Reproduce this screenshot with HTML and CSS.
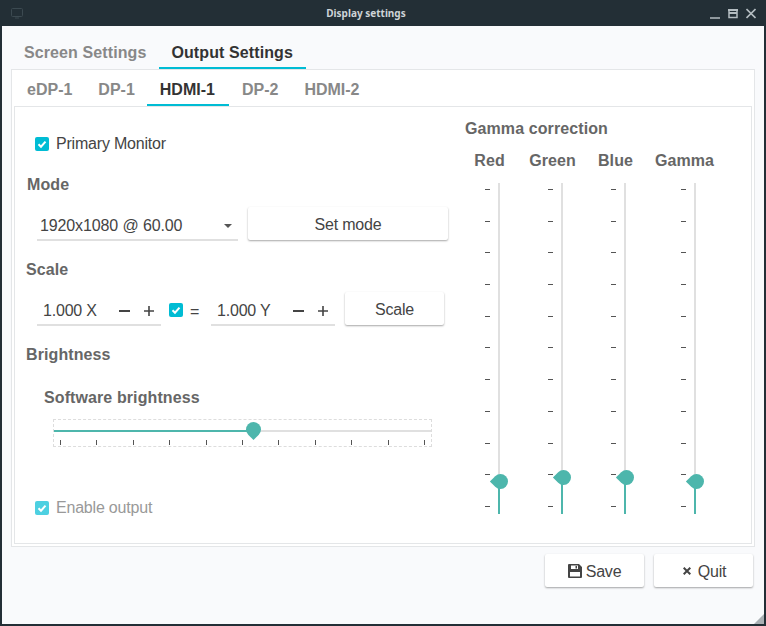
FILE: index.html
```html
<!DOCTYPE html>
<html>
	<head>
		<meta charset="utf-8">
		<title>Display settings</title>
		<link rel="stylesheet" href="styles.css">
	</head>
	<body>
		<div class="window">
			<div class="titlebar">
				<svg class="title-icon" width="14" height="12" viewBox="0 0 14 12"><path d="M2.500 1.500h9a1 1 0 0 1 1 1v6a1 1 0 0 1-1 1h-9a1 1 0 0 1-1-1v-6a1 1 0 0 1 1-1zM5 11h4" fill="none" stroke="#3c4a51" stroke-width="1"/></svg>
				<span class="title-text">Display settings</span>
				<div class="title-buttons">
					<svg width="10" height="11" viewBox="0 0 10 11"><path d="M0 10h10" stroke="#b4bdc1" stroke-width="1.500"/></svg>
					<svg width="10" height="11" viewBox="0 0 10 11"><path d="M1 2v7.500h8V2" fill="none" stroke="#b4bdc1" stroke-width="1.500"/><path d="M0 2h10M1 5h8" stroke="#b4bdc1" stroke-width="2"/></svg>
					<svg width="10" height="11" viewBox="0 0 10 11"><path d="M.5 1l9 9M9.500 1l-9 9" fill="none" stroke="#b4bdc1" stroke-width="1.600"/></svg>
				</div>
			</div>
			<div class="content">
				<div class="tabs outer-tabs">
					<div class="tab">Screen Settings</div>
					<div class="tab active">Output Settings</div>
				</div>
				<div class="outer-panel">
					<div class="tabs inner-tabs">
						<div class="tab">eDP-1</div>
						<div class="tab">DP-1</div>
						<div class="tab active">HDMI-1</div>
						<div class="tab">DP-2</div>
						<div class="tab">HDMI-2</div>
					</div>
					<div class="inner-panel">
						<div class="left-col">
							<label class="check-row primary"><span class="check"><svg width="14" height="14" viewBox="0 0 14 14"><path d="M3.500 7.200l2.500 2.500 4.500-5" fill="none" stroke="#fff" stroke-width="2"/></svg></span>Primary Monitor</label>
							<div class="heading mode-heading">Mode</div>
							<div class="mode-row">
								<div class="combo">1920x1080 @ 60.00<span class="arrow"></span></div>
								<div class="button set-mode">Set mode</div>
							</div>
							<div class="heading scale-heading">Scale</div>
							<div class="scale-row">
								<div class="spin">
									<span class="spin-value">1.000 X</span>
									<svg class="spin-btn" width="25" height="20" viewBox="0 0 25 20"><path d="M7 10h11" stroke="#444" stroke-width="2"/></svg>
									<svg class="spin-btn" width="25" height="20" viewBox="0 0 25 20"><path d="M8 10h10M13 5v10" stroke="#444" stroke-width="1.600"/></svg>
								</div>
								<span class="check"><svg width="14" height="14" viewBox="0 0 14 14"><path d="M3.500 7.200l2.500 2.500 4.500-5" fill="none" stroke="#fff" stroke-width="2"/></svg></span>
								<span class="equals">=</span>
								<div class="spin">
									<span class="spin-value">1.000 Y</span>
									<svg class="spin-btn" width="25" height="20" viewBox="0 0 25 20"><path d="M7 10h11" stroke="#444" stroke-width="2"/></svg>
									<svg class="spin-btn" width="25" height="20" viewBox="0 0 25 20"><path d="M8 10h10M13 5v10" stroke="#444" stroke-width="1.600"/></svg>
								</div>
								<div class="button scale-button">Scale</div>
							</div>
							<div class="heading brightness-heading">Brightness</div>
							<div class="heading software-heading">Software brightness</div>
							<div class="h-slider">
								<div class="h-track"><div class="h-fill"></div><div class="thumb thumb-down"></div></div>
								<div class="h-ticks">
									<i></i><i></i><i></i><i></i><i></i><i></i><i></i><i></i><i></i><i></i><i></i>
								</div>
							</div>
							<label class="check-row disabled"><span class="check"><svg width="14" height="14" viewBox="0 0 14 14"><path d="M3.500 7.200l2.500 2.500 4.500-5" fill="none" stroke="#fff" stroke-width="2"/></svg></span>Enable output</label>
						</div>
						<div class="right-col">
							<div class="heading gamma-heading">Gamma correction</div>
							<div class="gamma-cols">
								<div class="gamma-col">
									<div class="heading gamma-label">Red</div>
									<div class="v-slider">
										<div class="v-ticks"><i></i><i></i><i></i><i></i><i></i><i></i><i></i><i></i><i></i><i></i><i></i></div>
										<div class="v-track"><div class="v-fill" style="height:33px"></div><div class="thumb thumb-left" style="bottom:25px"></div></div>
									</div>
								</div>
								<div class="gamma-col">
									<div class="heading gamma-label">Green</div>
									<div class="v-slider">
										<div class="v-ticks"><i></i><i></i><i></i><i></i><i></i><i></i><i></i><i></i><i></i><i></i><i></i></div>
										<div class="v-track"><div class="v-fill" style="height:37px"></div><div class="thumb thumb-left" style="bottom:29px"></div></div>
									</div>
								</div>
								<div class="gamma-col">
									<div class="heading gamma-label">Blue</div>
									<div class="v-slider">
										<div class="v-ticks"><i></i><i></i><i></i><i></i><i></i><i></i><i></i><i></i><i></i><i></i><i></i></div>
										<div class="v-track"><div class="v-fill" style="height:37px"></div><div class="thumb thumb-left" style="bottom:29px"></div></div>
									</div>
								</div>
								<div class="gamma-col wide">
									<div class="heading gamma-label">Gamma</div>
									<div class="v-slider">
										<div class="v-ticks"><i></i><i></i><i></i><i></i><i></i><i></i><i></i><i></i><i></i><i></i><i></i></div>
										<div class="v-track"><div class="v-fill" style="height:33px"></div><div class="thumb thumb-left" style="bottom:25px"></div></div>
									</div>
								</div>
							</div>
						</div>
					</div>
				</div>
				<div class="footer">
					<div class="button footer-button">
						<svg width="14" height="14" viewBox="0 0 14 14"><path fill-rule="evenodd" d="M1 0h10l3 3v10a1 1 0 0 1-1 1H1a1 1 0 0 1-1-1V1a1 1 0 0 1 1-1zM3 1.500V5h7V1.500zM7.500 2h1.500v2.500H7.500zM2 8v4.500h10V8z" fill="#444"/></svg>
						Save
					</div>
					<div class="button footer-button quit">
						<svg width="8" height="8" viewBox="0 0 8 8"><path d="M.7.7l6.600 6.600M7.300.7L.7 7.300" fill="none" stroke="#444" stroke-width="2"/></svg>
						Quit
					</div>
				</div>
				<div class="grip"></div>
			</div>
		</div>
	</body>
</html>
```

FILE: styles.css
```css
body{
	margin: 0;
	font-family: "Liberation Sans", Arial, sans-serif;
	font-size: 16px;
	line-height: 20px;
	letter-spacing: -.2px;
	color: #444;
}
.window{
	width: 766px;
	height: 626px;
	display: flex;
	flex-direction: column;
	background: #232f36;
	overflow: hidden;
}
.titlebar{
	height: 26px;
	flex: none;
	display: flex;
	align-items: center;
	position: relative;
	padding: 0 10px;
}
.title-text{
	position: absolute;
	left: 0;
	right: 34px;
	text-align: center;
	font-family: "Noto Sans", sans-serif;
	font-size: 10px;
	font-weight: 700;
	letter-spacing: 0;
	color: #ced4d7;
}
.title-buttons{
	margin-left: auto;
	display: flex;
	gap: 8px;
}
.content{
	position: relative;
	flex: 1;
	margin: 0 2px 2px 2px;
	background: #f9fafc;
	display: flex;
	flex-direction: column;
}
.tabs{
	display: flex;
	font-weight: 700;
	color: #888;
	letter-spacing: .1px;
}
.tab{
	padding: 0 13px 4px;
	border-bottom: 2px solid transparent;
}
.tab.active{
	color: #333;
	border-bottom-color: #00bcd4;
}
.outer-tabs{
	padding: 17px 0 0 10px;
}
.outer-tabs .tab{
	padding-left: 12px;
}
.outer-panel{
	margin: 0 9px 0 9px;
	height: 478px;
	box-sizing: border-box;
	background: #fff;
	border: 1px solid #e4e6e8;
	padding: 10px 2px 2px;
}
.inner-tabs{
	letter-spacing: 0;
}
.inner-tabs .active{
	margin-left: -1px;
	padding-right: 14px;
}
.inner-panel{
	display: flex;
	height: 438px;
	box-sizing: border-box;
	border: 1px solid #e4e6e8;
}
.left-col{
	width: 450px;
	flex: none;
}
.heading{
	font-weight: 700;
	color: #666;
	letter-spacing: .1px;
}
.check-row{
	display: flex;
	align-items: center;
	margin-left: 20px;
}
.check{
	width: 14px;
	height: 14px;
	flex: none;
	border-radius: 2px;
	background: #00bcd4;
	display: block;
}
.check svg{
	display: block;
}
.check-row .check{
	margin-right: 7px;
}
.primary{
	margin-top: 27px;
}
.mode-heading{
	margin: 21px 0 0 12px;
}
.mode-row{
	display: flex;
	margin: 12px 0 0 22px;
	height: 34px;
}
.combo{
	width: 201px;
	height: 34px;
	box-sizing: border-box;
	border-bottom: 2px solid #e0e0e0;
	padding: 9px 0 0 3px;
	position: relative;
	letter-spacing: -.12px;
}
.arrow{
	position: absolute;
	right: 6px;
	top: 17px;
	border-left: 4px solid transparent;
	border-right: 4px solid transparent;
	border-top: 4px solid #555;
}
.button{
	background: #fff;
	border-radius: 2px;
	box-shadow: 0 1px 2px rgba(0,0,0,.35);
	text-align: center;
	line-height: 35px;
	height: 33px;
}
.set-mode{
	width: 200px;
	margin-left: 10px;
}
.scale-heading{
	margin: 19px 0 0 11px;
}
.scale-row{
	display: flex;
	align-items: flex-start;
	margin: 12px 0 0 22px;
	height: 34px;
}
.spin{
	width: 124px;
	height: 34px;
	box-sizing: border-box;
	border-bottom: 2px solid #e0e0e0;
	padding: 9px 0 0 6px;
	display: flex;
	flex: none;
}
.spin-value{
	flex: 1;
}
.spin-btn{
	flex: none;
}
.spin-btn:last-child{
	margin-left: -1px;
}
.scale-row .check{
	margin: 11px 0 0 8px;
}
.equals{
	margin: 10px 12px 0 7px;
	width: 9px;
}
.scale-button{
	width: 99px;
	margin-left: 10px;
}
.brightness-heading{
	margin: 19px 0 0 11px;
}
.software-heading{
	margin: 23px 0 0 29px;
}
.h-slider{
	margin: 11px 0 0 38px;
	width: 379px;
	height: 28px;
	box-sizing: border-box;
	border: 1px dashed #ddd;
	position: relative;
}
.h-track{
	position: absolute;
	left: 0;
	right: 0;
	top: 10px;
	height: 2px;
	background: #e0e0e0;
}
.h-fill{
	width: 198px;
	height: 2px;
	background: #4db6ac;
}
.thumb{
	position: absolute;
	width: 15px;
	height: 15px;
	background: #4db6ac;
	border-radius: 50% 50% 50% 0;
}
.thumb-down{
	left: 192px;
	top: -8px;
	transform: rotate(-45deg);
}
.thumb-left{
	left: -5px;
	transform: rotate(45deg);
}
.h-ticks{
	position: absolute;
	left: 6px;
	right: 6px;
	top: 20px;
	display: flex;
	justify-content: space-between;
}
.h-ticks i{
	width: 1px;
	height: 5px;
	background: #555;
}
.disabled{
	margin-top: 51px;
	color: #999;
}
.disabled .check{
	background: #4dd0e1;
}
.gamma-heading{
	margin-top: 12px;
}
.right-col{
	flex: 1;
}
.gamma-cols{
	display: flex;
	margin: 12px 0 0 -7px;
}
.gamma-col{
	width: 63px;
}
.gamma-col.wide{
	width: 75px;
}
.gamma-label{
	text-align: center;
}
.v-slider{
	display: flex;
	height: 331px;
	margin: 12px 0 0 27px;
}
.wide .v-slider{
	margin-left: 34px;
}
.v-ticks{
	width: 5px;
	padding: 6px 0 7px;
	display: flex;
	flex-direction: column;
	justify-content: space-between;
	box-sizing: border-box;
}
.v-ticks i{
	width: 5px;
	height: 1px;
	background: #555;
}
.v-track{
	width: 2px;
	margin-left: 8px;
	background: #e0e0e0;
	position: relative;
}
.v-fill{
	position: absolute;
	left: 0;
	right: 0;
	bottom: 0;
	background: #4db6ac;
}
.footer{
	display: flex;
	justify-content: flex-end;
	gap: 10px;
	margin: 7px 11px 0 0;
}
.footer-button{
	width: 99px;
	display: flex;
	align-items: center;
	justify-content: center;
	gap: 4px;
	padding-top: 1px;
	height: 32px;
}
.quit{
	gap: 7px;
	box-sizing: border-box;
	padding-left: 2px;
	height: 33px;
}
.grip{
	position: absolute;
	right: 0;
	bottom: 0;
	width: 10px;
	height: 10px;
	background: #aab0b4;
	clip-path: polygon(100% 0, 100% 100%, 0 100%);
}
```
